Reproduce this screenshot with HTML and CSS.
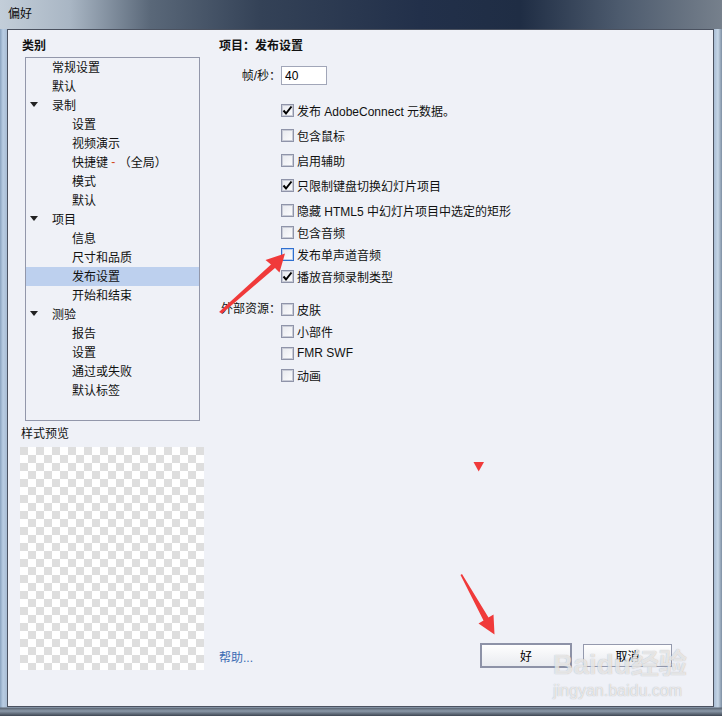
FILE: index.html
```html
<!DOCTYPE html>
<html lang="zh-CN">
<head>
    <meta charset="UTF-8">
    <title>偏好</title>
    <link rel="stylesheet" href="styles.css">
</head>
<body>
    <div class="window">
        <div class="titlebar">偏好</div>
        <div class="panel">
            <div class="sidebar">
                <div class="heading">类别</div>
                <ul class="tree">
                    <li class="lvl1">常规设置</li>
                    <li class="lvl1">默认</li>
                    <li class="lvl1 open"><span class="caret"></span>录制</li>
                    <li class="lvl2">设置</li>
                    <li class="lvl2">视频演示</li>
                    <li class="lvl2">快捷键 <span class="dash">-</span> （全局）</li>
                    <li class="lvl2">模式</li>
                    <li class="lvl2">默认</li>
                    <li class="lvl1 open"><span class="caret"></span>项目</li>
                    <li class="lvl2">信息</li>
                    <li class="lvl2">尺寸和品质</li>
                    <li class="lvl2 selected">发布设置</li>
                    <li class="lvl2">开始和结束</li>
                    <li class="lvl1 open"><span class="caret"></span>测验</li>
                    <li class="lvl2">报告</li>
                    <li class="lvl2">设置</li>
                    <li class="lvl2">通过或失败</li>
                    <li class="lvl2">默认标签</li>
                </ul>
                <div class="preview-label">样式预览</div>
                <div class="preview"></div>
            </div>

            <div class="main">
                <div class="heading">项目：发布设置</div>
                <div class="field">
                    <span class="label">帧/秒：</span>
                    <input class="fps" type="text" value="40">
                </div>

                <div class="options">
                    <div class="opt spaced"><span class="box"><svg viewBox="0 0 11 11"><path d="M1.5 5.5 L4 8.5 L9.5 1.5"/></svg></span>发布 AdobeConnect 元数据。</div>
                    <div class="opt spaced"><span class="box"></span>包含鼠标</div>
                    <div class="opt spaced"><span class="box"></span>启用辅助</div>
                    <div class="opt spaced"><span class="box"><svg viewBox="0 0 11 11"><path d="M1.5 5.5 L4 8.5 L9.5 1.5"/></svg></span>只限制键盘切换幻灯片项目</div>
                    <div class="opt"><span class="box"></span>隐藏 HTML5 中幻灯片项目中选定的矩形</div>
                    <div class="opt"><span class="box"></span>包含音频</div>
                    <div class="opt"><span class="box focus"></span>发布单声道音频</div>
                    <div class="opt"><span class="box"><svg viewBox="0 0 11 11"><path d="M1.5 5.5 L4 8.5 L9.5 1.5"/></svg></span>播放音频录制类型</div>
                </div>

                <div class="resources">
                    <span class="label">外部资源：</span>
                    <div class="res-list">
                        <div class="opt"><span class="box"></span>皮肤</div>
                        <div class="opt"><span class="box"></span>小部件</div>
                        <div class="opt"><span class="box"></span>FMR SWF</div>
                        <div class="opt"><span class="box"></span>动画</div>
                    </div>
                </div>

                <div class="footer">
                    <span class="help">帮助...</span>
                    <div class="buttons">
                        <button class="btn default" type="button">好</button>
                        <button class="btn" type="button">取消</button>
                    </div>
                </div>
            </div>
        </div>

        <!-- red annotation arrows drawn over the dialog -->
        <svg class="marks" viewBox="0 0 722 716">
            <path d="M219 312 L271 264.5 L265.5 260 L285 253.5 L279.5 272.5 L275 268 L222 313.5 Z"/>
            <path d="M462 574 L488.5 617.5 L493.5 614.5 L494.5 634.5 L478.5 623.5 L483.5 620.5 L460.5 575 Z"/>
            <path d="M473.5 462 L484 462 L478.7 471.5 Z"/>
        </svg>

        <div class="watermark">
            <div class="wm-logo">Baidu经验</div>
            <div class="wm-url">jingyan.baidu.com</div>
        </div>
    </div>
</body>
</html>
```

FILE: styles.css
```css
body {
    margin: 0;
    font-family: "Liberation Sans", "Noto Sans CJK SC", sans-serif;
    font-size: 12px;
    color: #111;
    background: #fff;
}
.window {
    position: relative;
    width: 722px;
    height: 716px;
    display: flex;
    flex-direction: column;
    background:
        linear-gradient(to bottom, transparent 707px, #5b6572 708px, #8a98a8 711px, #3f4753 716px),
        linear-gradient(to right, #8aa3bf 0, #b9cde3 3px, #a9bdd4 7px, #a9bdd4 714px, #c6d6e6 718px, #7d8ea2 722px);
    overflow: hidden;
}
.titlebar {
    height: 29px;
    flex: none;
    padding-left: 8px;
    line-height: 29px;
    font-size: 12px;
    color: #0c0c0c;
    background: linear-gradient(to right, #c3ced9 0, #a9b6c4 70px, #5a6879 150px, #344257 260px, #22304a 420px, #1f2d44 520px, #4d5b6e 620px, #76808c 722px);
}
.panel {
    height: 678px;
    margin: 0 8px 0 7px;
    box-sizing: border-box;
    border: 1px solid #4b5260;
    background: #eff1f7;
    display: flex;
    padding-top: 8px;
}
.heading {
    font-weight: bold;
    line-height: 16px;
}

/* left side */
.sidebar {
    width: 185px;
    padding-left: 12px;
    flex: none;
}
.sidebar .heading {
    padding-left: 2px;
}
.tree {
    list-style: none;
    margin: 3px 0 0 5px;
    padding: 0;
    width: 175px;
    height: 364px;
    box-sizing: border-box;
    border: 1px solid #9297aa;
}
.tree li {
    display: flex;
    align-items: center;
    height: 19px;
    box-sizing: border-box;
    padding-bottom: 2px;
    white-space: pre;
}
.tree .lvl1 {
    padding-left: 26px;
}
.tree .lvl1.open {
    padding-left: 4px;
}
.tree .lvl2 {
    padding-left: 46px;
}
.tree .selected {
    background: #bdd0ee;
}
.caret {
    width: 0;
    height: 0;
    border-left: 4px solid transparent;
    border-right: 4px solid transparent;
    border-top: 5px solid #222;
    margin-right: 14px;
}
.dash {
    color: #d2481a;
}
.preview-label {
    margin-top: 5px;
    padding-left: 1px;
    line-height: 16px;
}
.preview {
    margin-top: 5px;
    width: 184px;
    height: 223px;
    background-color: #fff;
    background-image: conic-gradient(#fff 25%, #dedede 0 50%, #fff 0 75%, #dedede 0);
    background-size: 16px 16px;
}

/* right side */
.main {
    flex: 1;
    margin-left: 14px;
    padding-right: 41px;
    padding-bottom: 38px;
    display: flex;
    flex-direction: column;
}
.label {
    width: 62px;
    flex: none;
    text-align: right;
    line-height: 22px;
}
.field {
    display: flex;
    align-items: center;
    margin-top: 12px;
    height: 19px;
}
.fps {
    width: 46px;
    height: 19px;
    box-sizing: border-box;
    border: 1px solid #a1a6b8;
    padding: 0 3px;
    font: inherit;
    color: #000;
    background: #fff;
    outline: none;
}
.options {
    margin: 14px 0 0 62px;
}
.opt {
    display: flex;
    align-items: center;
    height: 22px;
    white-space: nowrap;
}
.opt.spaced {
    margin-bottom: 3px;
}
.box {
    width: 13px;
    height: 13px;
    box-sizing: border-box;
    margin-right: 3px;
    border: 1px solid #8f94a9;
    box-shadow: inset 0 0 0 1px #c9ccd7;
    background: linear-gradient(to bottom right, #e6e8ee, #fdfdfe);
    flex: none;
    display: flex;
    align-items: center;
    justify-content: center;
}
.box.focus {
    border-color: #2f6fd0;
    box-shadow: inset 0 0 0 1px #b9cff0;
}
.box svg {
    width: 11px;
    height: 11px;
    fill: none;
    stroke: #000;
    stroke-width: 2;
}
.resources {
    display: flex;
    margin-top: 11px;
}
.footer {
    margin-top: auto;
    display: flex;
    align-items: center;
}
.help {
    color: #3b6cb3;
    line-height: 16px;
    padding-top: 5px;
}
.buttons {
    margin-left: auto;
    display: flex;
    align-items: center;
    gap: 11px;
}
.btn {
    font: inherit;
    color: #000;
    padding: 0;
    background: linear-gradient(to bottom, #fefefe, #e9ebf0);
    border: 1px solid #9499ad;
    width: 89px;
    height: 23px;
}
.btn.default {
    border: 2px solid #8d92a7;
    width: 92px;
    height: 25px;
}

/* overlays */
.marks {
    position: absolute;
    left: 0;
    top: 0;
    width: 722px;
    height: 716px;
    fill: #f03a3a;
    pointer-events: none;
}
.watermark {
    position: absolute;
    left: 553px;
    top: 648px;
    color: rgba(255, 255, 255, 0.7);
    text-shadow: 0 0 1px rgba(120, 120, 120, 0.6);
    pointer-events: none;
}
.wm-logo {
    font-weight: bold;
    font-size: 28px;
    line-height: 34px;
}
.wm-url {
    font-size: 16px;
    line-height: 18px;
}
```
